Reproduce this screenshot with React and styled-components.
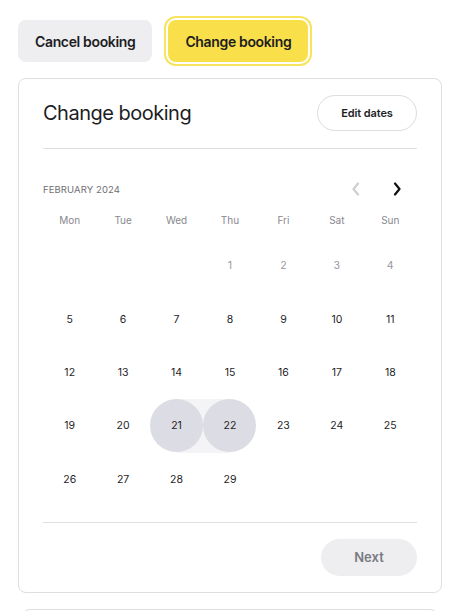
import React from 'react';
import styled, { createGlobalStyle } from 'styled-components';

const GlobalStyle = createGlobalStyle`
body{
    margin: 0;
    background: #ffffff;
    font-family: Inter, "Liberation Sans", sans-serif;
    color: #1d1d1f;
}
`

const Page = styled.div`
padding: 20px 22px 0 18px;
`
const Actions = styled.div`
display: flex;
gap: 16px;
`
const ActionButton = styled.button`
height: 42px;
padding: 0 17px;
border: none;
border-radius: 8px;
font-family: inherit;
font-size: 14px;
font-weight: 600;
letter-spacing: -0.35px;
color: #1d1d1f;
background: ${props => props.active ? '#f9e04b' : '#eeeef1'};
box-shadow: ${props => props.active ? '0 0 0 2px #ffffff, 0 0 0 4px #f8e35c' : 'none'};
`
const Card = styled.div`
margin-top: 16px;
padding: 16px 24px;
border: 1px solid #dedee3;
border-radius: 8px;
`
const Header = styled.div`
display: flex;
justify-content: space-between;
align-items: center;
`
const Title = styled.h2`
margin: 0;
font-size: 20px;
font-weight: 400;
letter-spacing: -0.5px;
`
const OutlineButton = styled.button`
width: 100px;
height: 36px;
border: 1px solid #dcdce1;
border-radius: 18px;
background: #ffffff;
font-family: inherit;
font-size: 11px;
font-weight: 600;
letter-spacing: -0.1px;
color: #1d1d1f;
`
const Divider = styled.div`
height: 1px;
background: #dfdfe3;
margin-top: ${props => props.top ?? 0}px;
`
const MonthRow = styled.div`
display: flex;
align-items: center;
justify-content: space-between;
height: 24px;
margin-top: 28px;
`
const MonthName = styled.span`
font-size: 9.5px;
color: #6f6f75;
letter-spacing: 0.1px;
`
const Nav = styled.div`
display: flex;
gap: 17px;
margin-right: 8px;
`
const NavButton = styled.button`
display: flex;
align-items: center;
justify-content: center;
width: 24px;
height: 24px;
padding: 0;
border: none;
background: none;
color: ${props => props.disabled ? '#cfcfd3' : '#111113'};
`
const Weekdays = styled.div`
display: grid;
grid-template-columns: repeat(7, 1fr);
height: 20px;
margin-top: 9px;
`
const Weekday = styled.div`
display: flex;
align-items: center;
justify-content: center;
font-size: 10px;
color: #88888e;
`
const Days = styled.div`
display: grid;
grid-template-columns: repeat(7, 1fr);
grid-auto-rows: 53.4px;
margin-top: 9px;
`
const DayCell = styled.div`
display: flex;
align-items: center;
justify-content: center;
background: ${props => props.range === 'start'
    ? 'linear-gradient(90deg, transparent 50%, #f4f4f6 50%)'
    : props.range === 'end'
        ? 'linear-gradient(90deg, #f4f4f6 50%, transparent 50%)'
        : 'none'};
`
const Day = styled.div`
display: flex;
align-items: center;
justify-content: center;
width: 53px;
height: 53px;
border-radius: 50%;
font-size: 10.5px;
color: ${props => props.muted ? '#98989e' : '#1d1d1f'};
background: ${props => props.selected ? '#dcdce4' : 'transparent'};
`
const Footer = styled.div`
display: flex;
justify-content: flex-end;
margin-top: 16px;
`
const NextButton = styled.button`
width: 96px;
height: 37px;
border: none;
border-radius: 19px;
background: #eeeef1;
font-family: inherit;
font-size: 13px;
font-weight: 600;
color: #7a7a82;
`
const NextCard = styled.div`
margin: 16px 4px 0 4px;
height: 40px;
border: 1px solid #dedee3;
border-bottom: none;
border-radius: 8px 8px 0 0;
`

const weekdays = ['Mon', 'Tue', 'Wed', 'Thu', 'Fri', 'Sat', 'Sun'];

function Chevron({ dir }){
    return (
        <svg width="10" height="14" viewBox="0 0 10 14" fill="none">
            <path
                d={dir === 'left' ? 'M7 1.5 L2.5 7 L7 12.5' : 'M3 1.5 L7.5 7 L3 12.5'}
                stroke="currentColor"
                strokeWidth="2.2"
                strokeLinecap="round"
                strokeLinejoin="round"
            />
        </svg>
    )
}

export default function App(){
    const cells = [];
    for(let i = 0; i < 3; i++) cells.push(null);
    for(let d = 1; d <= 29; d++) cells.push(d);

    return (
        <Page>
            <GlobalStyle />
            <Actions>
                <ActionButton>Cancel booking</ActionButton>
                <ActionButton active>Change booking</ActionButton>
            </Actions>
            <Card>
                <Header>
                    <Title>Change booking</Title>
                    <OutlineButton>Edit dates</OutlineButton>
                </Header>
                <Divider top={17} />
                <MonthRow>
                    <MonthName>FEBRUARY 2024</MonthName>
                    <Nav>
                        <NavButton disabled><Chevron dir="left" /></NavButton>
                        <NavButton><Chevron dir="right" /></NavButton>
                    </Nav>
                </MonthRow>
                <Weekdays>
                    {weekdays.map(w => <Weekday key={w}>{w}</Weekday>)}
                </Weekdays>
                <Days>
                    {cells.map((d, i) => (
                        <DayCell
                            key={i}
                            range={d === 21 ? 'start' : d === 22 ? 'end' : null}
                        >
                            {d && (
                                <Day
                                    muted={d < 5}
                                    selected={d === 21 || d === 22}
                                >
                                    {d}
                                </Day>
                            )}
                        </DayCell>
                    ))}
                </Days>
                <Divider top={16} />
                <Footer>
                    <NextButton>Next</NextButton>
                </Footer>
            </Card>
            <NextCard />
        </Page>
    )
}
